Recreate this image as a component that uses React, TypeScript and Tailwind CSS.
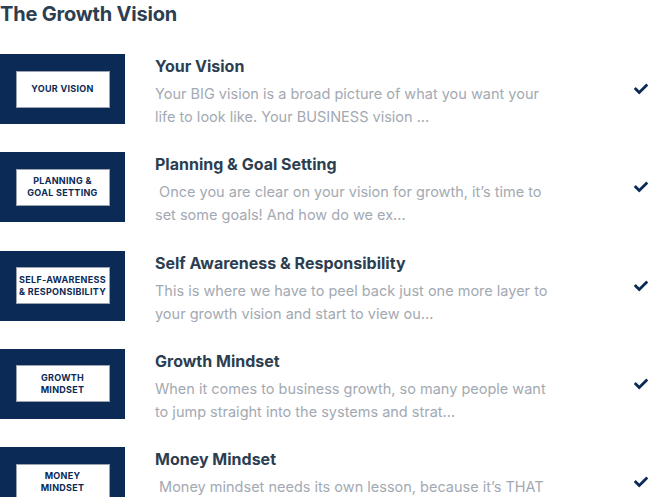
import { FaCheck } from 'react-icons/fa';

const lessons = [
  {
    label: ['YOUR VISION'],
    title: 'Your Vision',
    lines: ['Your BIG vision is a broad picture of what you want your', 'life to look like. Your BUSINESS vision ...'],
  },
  {
    label: ['PLANNING &', 'GOAL SETTING'],
    title: 'Planning & Goal Setting',
    lines: ['\u00a0Once you are clear on your vision for growth, it\u2019s time to', 'set some goals! And how do we ex...'],
  },
  {
    label: ['SELF-AWARENESS', '& RESPONSIBILITY'],
    title: 'Self Awareness & Responsibility',
    lines: ['This is where we have to peel back just one more layer to', 'your growth vision and start to view ou...'],
  },
  {
    label: ['GROWTH', 'MINDSET'],
    title: 'Growth Mindset',
    lines: ['When it comes to business growth, so many people want', 'to jump straight into the systems and strat...'],
  },
  {
    label: ['MONEY', 'MINDSET'],
    title: 'Money Mindset',
    lines: ['\u00a0Money mindset needs its own lesson, because it\u2019s THAT', 'important...'],
  },
];

export default function App() {
  return (
    <div className="w-[663px] h-[497px] overflow-hidden bg-white font-['Inter',sans-serif]">
      <h2 className="text-[20px] leading-[28px] font-bold text-[#2c3e50] tracking-[-0.2px]">The Growth Vision</h2>
      <ul className="mt-[26px] flex flex-col gap-[28.3px]">
        {lessons.map((l) => (
          <li key={l.title} className="flex items-center h-[70px] pr-[15px]">
            <div className="w-[125px] h-[70px] shrink-0 bg-[#0b2a56] flex items-center justify-center">
              <div className="w-[94px] h-[37px] bg-white border border-[#9aa3ae] flex flex-col items-center justify-center">
                {l.label.map((t) => (
                  <span key={t} className="text-[9px] leading-[12px] font-bold text-[#0b2a56] tracking-[0.3px]">{t}</span>
                ))}
              </div>
            </div>
            <div className="ml-[30px] flex-1 self-start">
              <h3 className="text-[16px] leading-[24px] font-bold text-[#2c3e50]">{l.title}</h3>
              <p className="mt-[4px] text-[14.5px] leading-[23px] text-[#a3a9b2]">
                {l.lines.map((t) => (
                  <span key={t} className="block whitespace-nowrap">{t}</span>
                ))}
              </p>
            </div>
            <FaCheck className="w-[14px] h-[14px] text-[#0b2a56]" />
          </li>
        ))}
      </ul>
    </div>
  );
}
